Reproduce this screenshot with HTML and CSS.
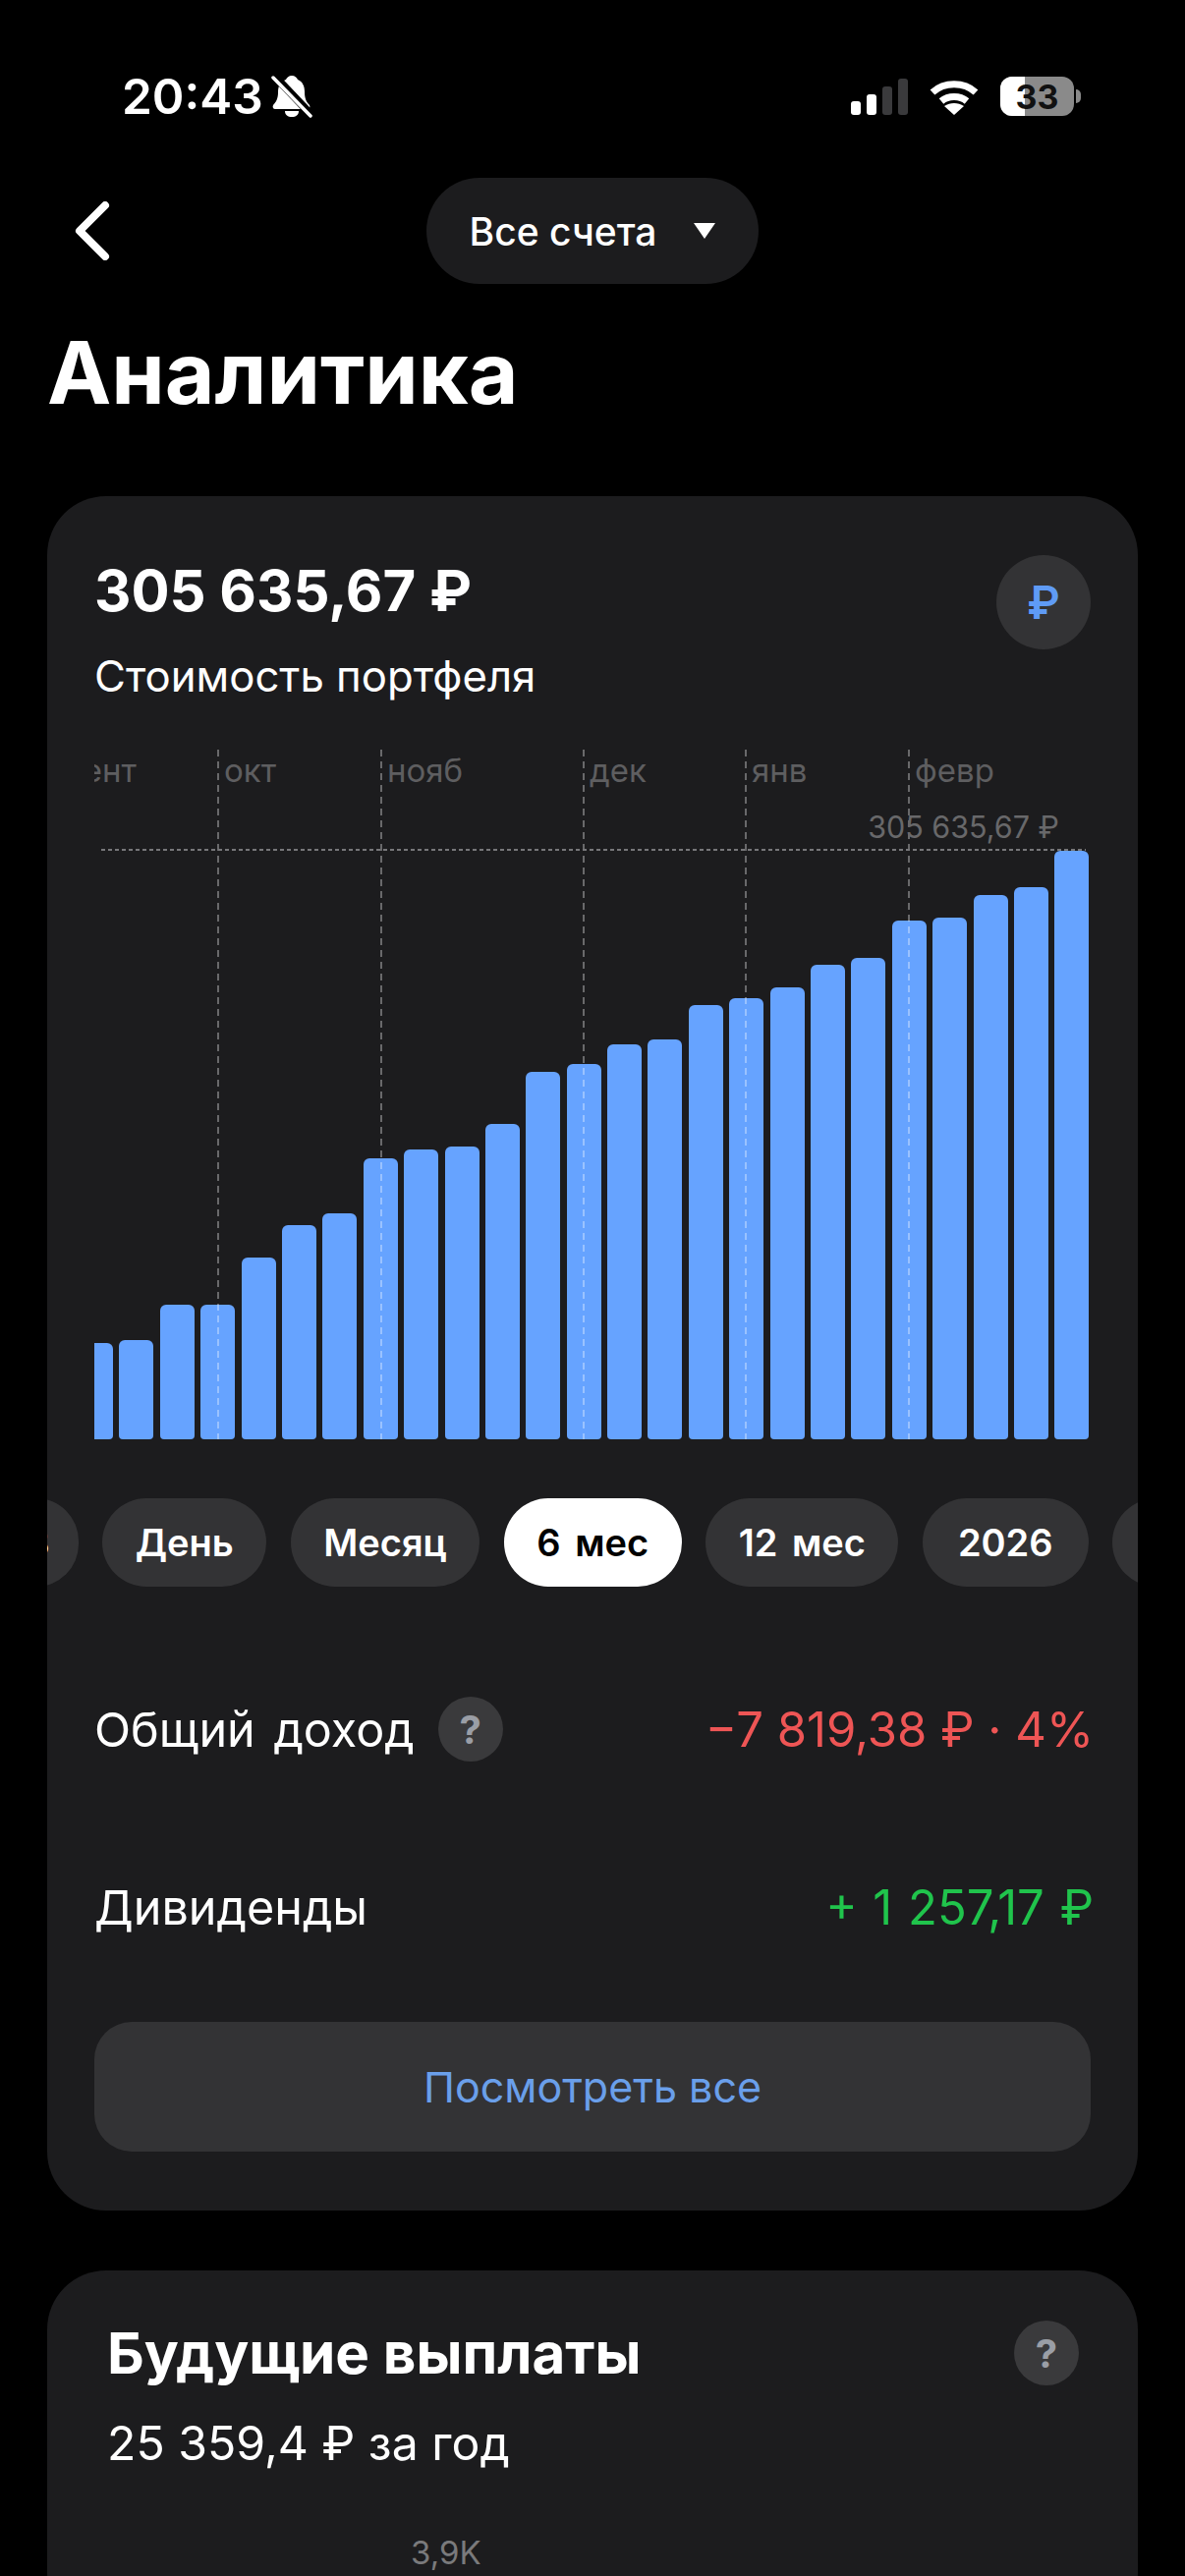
FILE: index.html
```html
<!DOCTYPE html>
<html lang="ru">
<head>
  <meta charset="UTF-8">
  <title>Аналитика</title>
  <link rel="stylesheet" href="styles.css">
</head>
<body>

<div class="status-bar">
  <div class="status-left">
    <span class="time">20:43</span>
    <svg class="bell" width="42" height="44" viewBox="0 0 42 44">
      <path fill="#fff" d="M21 1c3 0 5 2 6 4 5 2 7 7 7 12 0 6 1 10 5 14 1 2 0 4-2 4H4c-2 0-3-2-2-4 3-3 5-7 5-13 0-6 2-11 8-13 1-2 3-4 6-4z"/>
      <path fill="#fff" d="M14 37h14c0 4-3 6-7 6s-7-2-7-6z"/>
      <path stroke="#000" stroke-width="8" d="M3 1l38 40"/>
      <path stroke="#fff" stroke-width="3.5" stroke-linecap="round" d="M2 3l38 39"/>
    </svg>
  </div>
  <div class="status-right">
    <div class="signal">
      <span class="sig sig1"></span>
      <span class="sig sig2"></span>
      <span class="sig sig3"></span>
      <span class="sig sig4"></span>
    </div>
    <svg class="wifi" width="50" height="37" viewBox="0 0 50 37">
      <path fill="none" stroke="#fff" stroke-width="7" d="M3 14c12-11 32-11 44 0"/>
      <path fill="none" stroke="#fff" stroke-width="7" d="M12 23c7-6 19-6 26 0"/>
      <path fill="#fff" d="M25 37l-10-9c6-4 14-4 20 0z"/>
    </svg>
    <div class="battery">
      <div class="battery-body"><span class="battery-level"></span><span class="battery-text">33</span></div>
      <span class="battery-nub"></span>
    </div>
  </div>
</div>

<div class="nav">
  <svg class="back" width="36" height="60" viewBox="0 0 36 60">
    <path fill="none" stroke="#fff" stroke-width="8" stroke-linecap="round" stroke-linejoin="round" d="M31 4L5 30l26 26"/>
  </svg>
  <div class="account-pill">
    <span>Все счета</span>
    <span class="caret"></span>
  </div>
</div>

<h1>Аналитика</h1>

<div class="card">
  <div class="card-head">
    <div>
      <div class="amount">305 635,67 ₽</div>
      <div class="amount-label">Стоимость портфеля</div>
    </div>
    <div class="currency">₽</div>
  </div>

  <div class="chart">
    <div class="bars">
      <div class="bar first" style="height:98px"></div>
      <div class="bar" style="height:101px"></div>
      <div class="bar" style="height:137px"></div>
      <div class="bar" style="height:137px"></div>
      <div class="bar" style="height:185px"></div>
      <div class="bar" style="height:218px"></div>
      <div class="bar" style="height:230px"></div>
      <div class="bar" style="height:286px"></div>
      <div class="bar" style="height:295px"></div>
      <div class="bar" style="height:298px"></div>
      <div class="bar" style="height:321px"></div>
      <div class="bar" style="height:374px"></div>
      <div class="bar" style="height:382px"></div>
      <div class="bar" style="height:402px"></div>
      <div class="bar" style="height:407px"></div>
      <div class="bar" style="height:442px"></div>
      <div class="bar" style="height:449px"></div>
      <div class="bar" style="height:460px"></div>
      <div class="bar" style="height:483px"></div>
      <div class="bar" style="height:490px"></div>
      <div class="bar" style="height:528px"></div>
      <div class="bar" style="height:531px"></div>
      <div class="bar" style="height:554px"></div>
      <div class="bar" style="height:562px"></div>
      <div class="bar" style="height:599px"></div>
    </div>
    <div class="grid-line" style="left:-37px"><span>сент</span></div>
    <div class="grid-line" style="left:125px"><span>окт</span></div>
    <div class="grid-line" style="left:291px"><span>нояб</span></div>
    <div class="grid-line" style="left:497px"><span>дек</span></div>
    <div class="grid-line" style="left:662px"><span>янв</span></div>
    <div class="grid-line" style="left:828px"><span>февр</span></div>
    <div class="max-line"></div>
    <div class="max-value">305 635,67 ₽</div>
  </div>

  <div class="periods">
    <div class="period cut">3</div>
    <div class="period">День</div>
    <div class="period">Месяц</div>
    <div class="period active">6 мес</div>
    <div class="period">12 мес</div>
    <div class="period year">2026</div>
    <div class="period">2025</div>
  </div>

  <div class="row income">
    <div class="row-name">Общий доход <span class="help">?</span></div>
    <div class="row-value red">−7 819,38 ₽ · 4%</div>
  </div>
  <div class="row dividends">
    <div class="row-name">Дивиденды</div>
    <div class="row-value green">+ 1 257,17 ₽</div>
  </div>

  <div class="see-all">Посмотреть все</div>
</div>

<div class="card card-payouts">
  <div class="payouts-head">
    <div class="payouts-title">Будущие выплаты</div>
    <span class="help">?</span>
  </div>
  <div class="payouts-sum">25 359,4 ₽ за год</div>
  <div class="payouts-tick">3,9K</div>
</div>

</body>
</html>
```

FILE: styles.css
```css
* {
  box-sizing: border-box;
}
html, body {
  height: 2622px;
  overflow: hidden;
}
body {
  margin: 0;
  background: #000;
  color: #fff;
  font-family: Inter, 'Noto Sans', sans-serif;
}

/* status bar */
.status-bar {
  display: flex;
  justify-content: space-between;
  align-items: center;
  height: 44px;
  margin-top: 76px;
  padding: 0 106px 0 124px;
}
.status-left {
  display: flex;
  align-items: center;
  gap: 8px;
}
.time {
  font-size: 49.5px;
  font-weight: 600;
  line-height: 44px;
}
.status-right {
  display: flex;
  align-items: center;
  gap: 22px;
}
.signal {
  display: flex;
  align-items: flex-end;
  gap: 6px;
  height: 37px;
}
.sig {
  width: 10px;
  border-radius: 3px;
  background: #fff;
}
.sig1 { height: 14px; }
.sig2 { height: 21px; }
.sig3 { height: 29px; background: #3a3a3c; }
.sig4 { height: 37px; background: #3a3a3c; }
.battery {
  display: flex;
  align-items: center;
  gap: 2px;
}
.battery-body {
  position: relative;
  width: 75px;
  height: 40px;
  border-radius: 12px;
  background: #8a8a8a;
  overflow: hidden;
  display: flex;
  align-items: center;
  justify-content: center;
}
.battery-level {
  position: absolute;
  left: 0;
  top: 0;
  bottom: 0;
  width: 25px;
  background: #fff;
}
.battery-text {
  position: relative;
  font-size: 34px;
  font-weight: 700;
  color: #111;
}
.battery-nub {
  width: 5px;
  height: 14px;
  border-radius: 0 5px 5px 0;
  background: #8a8a8a;
}

/* nav */
.nav {
  display: flex;
  justify-content: center;
  position: relative;
  margin-top: 61px;
}
.back {
  position: absolute;
  left: 76px;
  top: 24px;
}
.account-pill {
  display: flex;
  align-items: center;
  gap: 38px;
  height: 108px;
  padding: 0 44px;
  border-radius: 54px;
  background: #1c1c1e;
  font-size: 39px;
  font-weight: 500;
}
.caret {
  width: 0;
  height: 0;
  border-left: 11px solid transparent;
  border-right: 11px solid transparent;
  border-top: 16px solid #fff;
}

h1 {
  margin: 40px 0 0 48px;
  font-size: 87.5px;
  font-weight: 700;
  line-height: 100px;
}

/* cards */
.card {
  margin: 0 48px;
  padding: 60px 48px;
  border-radius: 60px;
  background: #1c1c1e;
}
h1 + .card {
  margin-top: 76px;
}
.card-head {
  display: flex;
  justify-content: space-between;
  align-items: flex-start;
}
.amount {
  font-size: 58px;
  font-weight: 700;
  line-height: 72px;
}
.amount-label {
  margin-top: 26px;
  font-size: 43.7px;
  line-height: 52px;
}
.currency {
  display: flex;
  align-items: center;
  justify-content: center;
  width: 96px;
  height: 96px;
  border-radius: 50%;
  background: #333335;
  color: #5f9bf5;
  font-size: 46px;
  font-weight: 600;
}

/* chart */
.chart {
  position: relative;
  height: 702px;
  margin-top: 48px;
  overflow: hidden;
}
.bars {
  position: absolute;
  left: 0;
  right: 0;
  bottom: 0;
  display: flex;
  align-items: flex-end;
  gap: 6.4px;
}
.bar {
  flex: none;
  width: 35px;
  border-radius: 6px 6px 4px 4px;
  background: #66a3ff;
}
.bar.first {
  width: 19px;
  border-radius: 0 6px 4px 0;
}
.grid-line {
  position: absolute;
  top: 0;
  bottom: 0;
  width: 2px;
  background: repeating-linear-gradient(to bottom, rgba(255, 255, 255, 0.34) 0 7px, transparent 7px 12px);
}
.grid-line span {
  position: absolute;
  left: 7px;
  top: 1px;
  font-size: 33px;
  color: #5e5e60;
}
.max-line {
  position: absolute;
  left: 7px;
  right: 5px;
  top: 101px;
  height: 2px;
  background: repeating-linear-gradient(to right, #77777a 0 4px, transparent 4px 7px);
}
.max-value {
  position: absolute;
  right: 32px;
  top: 60px;
  font-size: 30.5px;
  color: #68686a;
}

/* period pills */
.periods {
  display: flex;
  gap: 24.5px;
  margin: 60px -48px 0;
  overflow: hidden;
}
.period {
  flex: none;
  height: 90px;
  padding: 0 33.5px;
  border-radius: 45px;
  background: #333335;
  font-size: 38px;
  font-weight: 600;
  line-height: 90px;
  word-spacing: 5px;
}
.period.active {
  background: #fff;
  color: #000;
}
.period.cut {
  margin-left: -55px;
  padding-right: 29px;
}
.period.year {
  padding: 0 36px;
}

/* rows */
.row {
  display: flex;
  justify-content: space-between;
  align-items: center;
  height: 66px;
  font-size: 48.5px;
}
.income {
  margin-top: 112px;
}
.dividends {
  margin-top: 115px;
}
.row-name {
  display: flex;
  align-items: center;
  gap: 24px;
  word-spacing: 5px;
}
.row-value {
  margin-right: -3px;
  font-size: 49px;
}
.help {
  display: inline-flex;
  align-items: center;
  justify-content: center;
  width: 66px;
  height: 66px;
  border-radius: 50%;
  background: #3a3a3c;
  color: #9a9ea6;
  font-size: 40px;
  font-weight: 700;
}
.red {
  color: #ee5555;
}
.green {
  color: #20c44c;
  word-spacing: 2px;
}
.see-all {
  margin-top: 84px;
  height: 132px;
  border-radius: 38px;
  background: #333335;
  color: #6a9fea;
  font-size: 43px;
  line-height: 132px;
  text-align: center;
}

/* future payouts */
.card-payouts {
  margin-top: 61px;
  padding: 49px 60px 60px 61px;
}
.payouts-head {
  display: flex;
  justify-content: space-between;
  align-items: center;
}
.payouts-title {
  font-size: 58.3px;
  font-weight: 700;
}
.payouts-sum {
  margin-top: 28px;
  font-size: 48.2px;
  line-height: 58px;
}
.payouts-tick {
  margin: 62px 0 0 309px;
  font-size: 33px;
  line-height: 40px;
  color: #7a7a7c;
}
```
